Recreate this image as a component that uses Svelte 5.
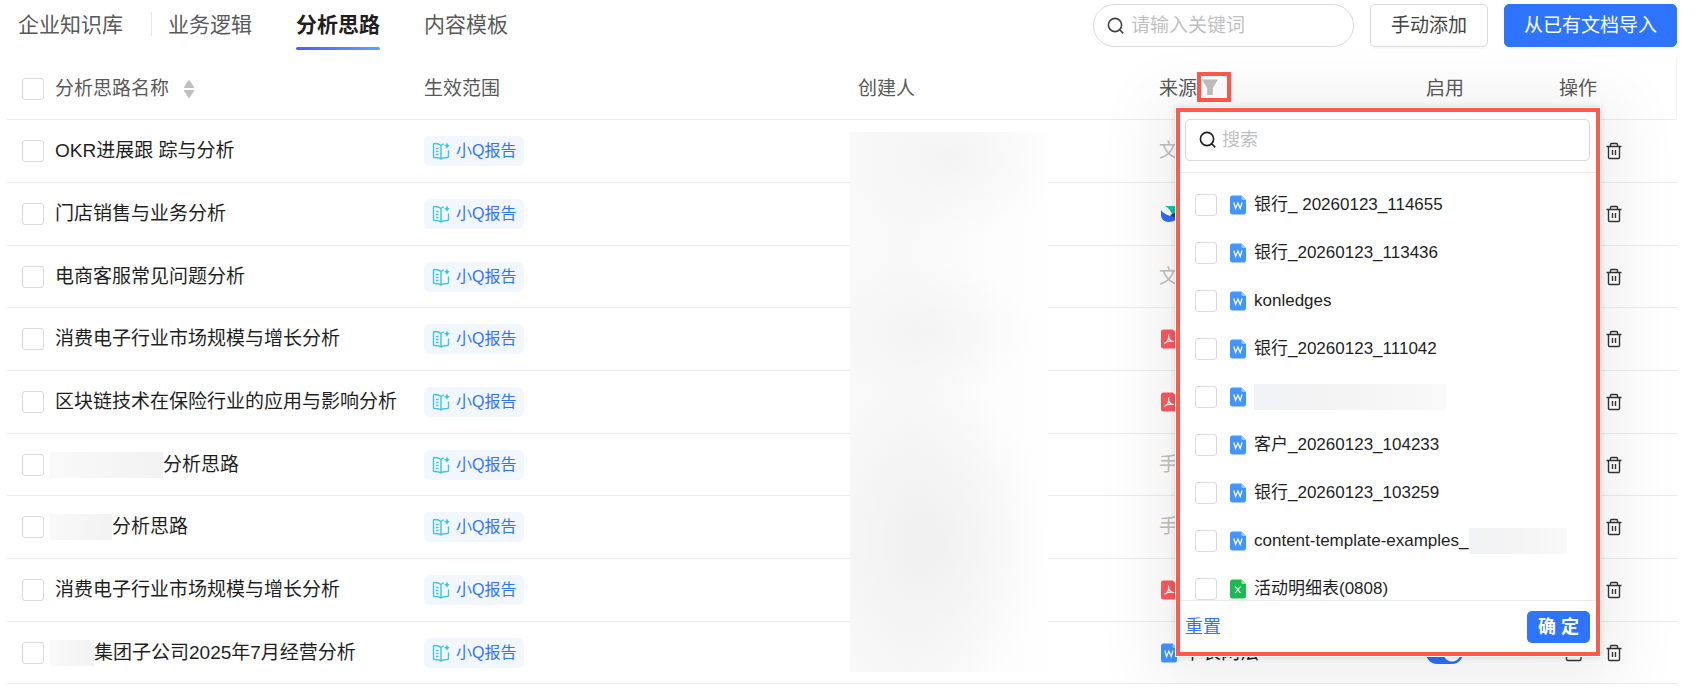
<script lang="ts">
	type FileKind = 'word' | 'excel' | 'pdf' | 'board';

	interface Row {
		name: string;
		mask?: number;
		kind?: FileKind;
		source?: string;
		enabled?: boolean;
	}

	interface Option {
		label: string;
		kind: FileKind;
		mask?: number;
	}

	const tabs = ['企业知识库', '业务逻辑', '分析思路', '内容模板'];
	let activeTab = $state('分析思路');

	const rows: Row[] = [
		{ name: 'OKR进展跟 踪与分析', source: '文' },
		{ name: '门店销售与业务分析', kind: 'board' },
		{ name: '电商客服常见问题分析', source: '文' },
		{ name: '消费电子行业市场规模与增长分析', kind: 'pdf' },
		{ name: '区块链技术在保险行业的应用与影响分析', kind: 'pdf' },
		{ name: '分析思路', mask: 113, source: '手' },
		{ name: '分析思路', mask: 62, source: '手' },
		{ name: '消费电子行业市场规模与增长分析', kind: 'pdf' },
		{ name: '集团子公司2025年7月经营分析', mask: 44, kind: 'word', source: '单表网法', enabled: true }
	];

	const options: Option[] = [
		{ label: '银行_ 20260123_114655', kind: 'word' },
		{ label: '银行_20260123_113436', kind: 'word' },
		{ label: 'konledges', kind: 'word' },
		{ label: '银行_20260123_111042', kind: 'word' },
		{ label: '', kind: 'word', mask: 192 },
		{ label: '客户_20260123_104233', kind: 'word' },
		{ label: '银行_20260123_103259', kind: 'word' },
		{ label: 'content-template-examples_', kind: 'word', mask: 98 },
		{ label: '活动明细表(0808)', kind: 'excel' }
	];
</script>

{#snippet searchIcon()}
	<svg class="search-icon" viewBox="0 0 18 18" width="18" height="18" aria-hidden="true">
		<circle cx="8" cy="8" r="6.6" />
		<path d="M12.8 12.8 16.2 16.4" />
	</svg>
{/snippet}

{#snippet fileIcon(kind: FileKind)}
	{#if kind === 'board'}
		<svg class="file" viewBox="0 0 18 20" width="18" height="20" aria-hidden="true">
			<path d="M4 2h14v7l-6 3C10 8 8 4 4 2z" fill="#0cc9a8" />
			<path d="M0 6c3 4 7 6 12 6l6-3c-1 6-5 9-10 9-5 0-8-3-8-7z" fill="#2f6bf2" />
			<path d="M9 11l5-2 4 2-4 3z" fill="#173a9a" />
		</svg>
	{:else}
		<svg class="file {kind}" viewBox="0 0 16 20" width="16" height="20" aria-hidden="true">
			<path class="sheet" d="M2.5 .5H11.500L16 5V17a2.500 2.500 0 0 1-2.500 2.500h-11A2.500 2.500 0 0 1 0 17V3A2.500 2.500 0 0 1 2.500 .5z" />
			<path class="fold" d="M11.500 .5 16 5h-3A1.500 1.500 0 0 1 11.500 3.500z" />
			{#if kind === 'word'}
				<path class="mark" d="M3.800 7.500 5.600 13.500 7.900 8 10.200 13.500 12 7.500" />
			{:else if kind === 'excel'}
				<path class="mark" d="M5.300 7.500 10.500 14M10.500 7.500 5.300 14" />
			{:else}
				<path class="mark" d="M7.500 5.500C8.500 9 6.500 12.500 3.500 14.500M7.500 8.500c1 2.500 3 4 5.500 4-3-.8-6-.5-8.500 1" />
			{/if}
		</svg>
	{/if}
{/snippet}

<div class="page">
	<header class="topbar">
		<nav class="tabs">
			{#each tabs as tab}
				<button class="tab" class:active={tab === activeTab} onclick={() => (activeTab = tab)}>
					{tab}
				</button>
			{/each}
		</nav>
		<div class="tools">
			<label class="search">
				{@render searchIcon()}
				<input type="text" placeholder="请输入关键词" aria-label="请输入关键词" />
			</label>
			<button class="btn">手动添加</button>
			<button class="btn primary">从已有文档导入</button>
		</div>
	</header>

	<div class="table-wrap">
		<table>
			<colgroup>
				<col class="c-check" />
				<col class="c-name" />
				<col class="c-scope" />
				<col class="c-creator" />
				<col class="c-source" />
				<col class="c-enable" />
				<col class="c-action" />
			</colgroup>
			<thead>
				<tr>
					<th><input type="checkbox" aria-label="全选" /></th>
					<th>
						<span class="cell">
							分析思路名称
							<svg class="sorter" viewBox="0 0 12 20" width="12" height="20" aria-hidden="true">
								<path d="M6 .5 11 8a.6.6 0 0 1-.5.9h-9A.6.6 0 0 1 1 8zM6 19.500 11 12a.6.6 0 0 0-.5-.9h-9A.6.6 0 0 0 1 12z" />
							</svg>
						</span>
					</th>
					<th>生效范围</th>
					<th>创建人</th>
					<th class="source-head">
						<span class="source-title">
							来源
							<button class="filter" aria-label="筛选来源">
								<svg viewBox="0 0 18 18" width="18" height="18" aria-hidden="true">
									<path d="M1 1.500h16l-5.200 8.500v7h-5.600v-7z" />
								</svg>
							</button>
						</span>
						<div class="popover">
							<label class="search box">
								{@render searchIcon()}
								<input type="text" placeholder="搜索" aria-label="搜索" />
							</label>
							<ul class="options">
								{#each options as option}
									<li>
										<label>
											<input type="checkbox" aria-label={option.label || '文档'} />
											{@render fileIcon(option.kind)}
											<span class="option-text">
												{option.label}{#if option.mask}<i class="mask" style:width="{option.mask}px"></i>{/if}
											</span>
										</label>
									</li>
								{/each}
							</ul>
							<div class="popover-foot">
								<button class="link">重置</button>
								<button class="confirm">确 定</button>
							</div>
						</div>
					</th>
					<th>启用</th>
					<th>操作</th>
				</tr>
			</thead>
			<tbody>
				{#each rows as row}
					<tr>
						<td><input type="checkbox" aria-label={row.name} /></td>
						<td>
							<span class="cell" class:masked={row.mask}>
								{#if row.mask}<i class="mask" style:width="{row.mask}px"></i>{/if}{row.name}
							</span>
						</td>
						<td>
							<span class="badge">
								<svg viewBox="0 0 18 18" width="18" height="18" aria-hidden="true">
									<path d="M9 3.500C7.500 2 5 1.500 2.500 1.500a1 1 0 0 0-1 1v12a1 1 0 0 0 1 1c2.500 0 5 0 6.500 1.500 1.500-1.500 4-1.500 6.500-1.500a1 1 0 0 0 1-1V8.500M9 3.500V17M9 3.500c.8-.8 1.700-1.300 2.800-1.600M4 6.500h2.500M4 9.500h2.500M4 12.500h2.500" />
									<path class="star" d="M15 .5l1 2.300 2 1-2 1-1 2.300-1-2.300-2-1 2-1z" />
								</svg>
								小Q报告
							</span>
						</td>
						<td></td>
						<td>
							<span class="source">
								{#if row.kind}{@render fileIcon(row.kind)}{/if}
								{#if row.source}<span class:muted={!row.kind}>{row.source}</span>{/if}
							</span>
						</td>
						<td>
							{#if row.enabled}
								<input class="switch" type="checkbox" role="switch" checked aria-label="启用" />
							{/if}
						</td>
						<td>
							<span class="actions">
								<button class="icon-btn" aria-label="编辑">
									<svg viewBox="0 0 18 18" width="18" height="18" aria-hidden="true">
										<path d="M10 2H3a1.500 1.500 0 0 0-1.500 1.500V15A1.500 1.500 0 0 0 3 16.500h11.500A1.500 1.500 0 0 0 16 15V8M7 11l8-8" />
									</svg>
								</button>
								<button class="icon-btn" aria-label="删除">
									<svg viewBox="0 0 18 18" width="18" height="18" aria-hidden="true">
										<path d="M1.500 4.500h15M5.500 4.500V2.500a1 1 0 0 1 1-1h5a1 1 0 0 1 1 1v2M3.500 4.500V15.500a1 1 0 0 0 1 1h9a1 1 0 0 0 1-1V4.500M7.500 8v5M10.500 8v5" />
									</svg>
								</button>
							</span>
						</td>
					</tr>
				{/each}
			</tbody>
		</table>
		<div class="creator-mask"></div>
	</div>
</div>

<style>
	:global(body) {
		background: #fff;
	}

	.page {
		padding: 4px 21px 0 7px;
		color: #1f1f1f;
		font-family: 'Liberation Sans', 'Noto Sans CJK SC', sans-serif;
		font-size: 19px;
		line-height: 24px;
	}

	button,
	input {
		margin: 0;
		font: inherit;
	}

	button {
		padding: 0;
		border: 0;
		background: none;
		color: inherit;
		cursor: pointer;
	}

	svg {
		flex: none;
		display: block;
	}

	.topbar {
		display: flex;
		justify-content: space-between;
		align-items: flex-start;
	}

	.tabs {
		display: flex;
		padding-left: 11px;

		.tab {
			position: relative;
			height: 46px;
			margin-right: 44px;
			padding-bottom: 5px;
			color: #595959;
			font-size: 21px;
		}

		.tab:first-child {
			margin-right: 16px;
			padding-right: 29px;
		}

		.tab:first-child::after {
			content: '';
			position: absolute;
			top: 8px;
			right: 0;
			width: 1px;
			height: 24px;
			background: #e6e6e6;
		}

		.active {
			color: #1f1f1f;
			font-weight: bold;
		}

		.active::after {
			content: '';
			position: absolute;
			left: 0;
			right: 0;
			bottom: 0;
			height: 3px;
			border-radius: 2px;
			background: linear-gradient(90deg, #5457ff, #55a6ff);
		}
	}

	.tools {
		display: flex;
		gap: 16px;
	}

	.search {
		display: flex;
		align-items: center;
		gap: 6px;
		box-sizing: border-box;
		width: 261px;
		height: 43px;
		padding: 0 13px;
		border: 1px solid #d9d9d9;
		border-radius: 22px;
		background: #fff;

		input {
			flex: 1;
			min-width: 0;
			padding: 0;
			border: 0;
			outline: 0;
			background: none;
		}

		input::placeholder {
			color: #bfbfbf;
		}
	}

	.search-icon {
		fill: none;
		stroke: #434343;
		stroke-width: 1.6;
	}

	.btn {
		box-sizing: border-box;
		height: 43px;
		padding: 0 20px;
		border: 1px solid #d9d9d9;
		border-radius: 5px;
		background: #fff;
		box-shadow: 0 2px 0 #fafafa;
		color: #434343;
	}

	.btn.primary {
		padding: 0 19px;
		border-color: #2f74ff;
		background: #2f74ff;
		color: #fff;
	}

	.table-wrap {
		position: relative;
		margin-top: 8px;
	}

	table {
		width: 100%;
		border-collapse: separate;
		border-spacing: 0;
		table-layout: fixed;
	}

	.c-check {
		width: 48px;
	}
	.c-name {
		width: 369px;
	}
	.c-scope {
		width: 434px;
	}
	.c-creator {
		width: 301px;
	}
	.c-source {
		width: 267px;
	}
	.c-enable {
		width: 133px;
	}

	th,
	td {
		box-sizing: border-box;
		height: 63px;
		padding: 0;
		border-bottom: 1px solid #ececec;
		text-align: left;
		vertical-align: middle;
	}

	th {
		height: 62px;
		color: #595959;
		font-weight: normal;
	}

	th:last-child {
		border-right: 1px solid #f5f5f5;
	}

	tbody tr:nth-child(3n) td {
		height: 62px;
	}

	th:first-child,
	td:first-child {
		padding-left: 15px;
	}

	input[type='checkbox'] {
		appearance: none;
		flex: none;
		display: block;
		box-sizing: border-box;
		width: 22px;
		height: 22px;
		border: 1px solid #d9d9d9;
		border-radius: 3px;
		background: #fff;
	}

	.cell {
		display: flex;
		align-items: center;
		white-space: nowrap;
	}

	.masked {
		margin-left: -5px;
	}

	.mask {
		display: inline-block;
		height: 26px;
		background: linear-gradient(90deg, #f9f9f9, #f2f2f2);
	}

	.option-text .mask {
		background: linear-gradient(90deg, #f2f3f7, #f3f3f3 40%, #f9f9f9);
	}

	.sorter {
		margin-left: 14px;
		fill: #bfbfbf;
	}

	.badge {
		display: inline-flex;
		align-items: center;
		gap: 6px;
		height: 30px;
		padding: 0 8px;
		border-radius: 6px;
		background: #f2f7ff;
		color: #2f74ff;
		font-size: 16px;
		vertical-align: middle;

		svg {
			fill: none;
			stroke: #3cc5dc;
			stroke-width: 1.4;
		}

		.star {
			fill: #3cc5dc;
			stroke: none;
		}
	}

	.creator-mask {
		position: absolute;
		top: 74px;
		bottom: 12px;
		left: 843px;
		width: 198px;
		background:
			radial-gradient(ellipse 110px 80px at 50% 5%, #f4f4f4, transparent),
			radial-gradient(ellipse 110px 70px at 36% 37%, #f4f4f4, transparent),
			radial-gradient(ellipse 120px 170px at 38% 76%, #f0f0f0, transparent),
			linear-gradient(90deg, #f9f9f9, #f8f8f8 30%, #fdfdfd 75%, #fefefe);
	}

	.source-head {
		position: relative;
	}

	.source-title {
		display: flex;
		align-items: center;
	}

	.filter {
		box-sizing: border-box;
		width: 34px;
		height: 30px;
		margin-bottom: 4px;
		border: 4px solid #ff5a4d;

		svg {
			fill: #bfbfbf;
		}
	}

	.source {
		display: flex;
		align-items: center;
		gap: 6px;
		white-space: nowrap;
	}

	.source .file {
		margin-left: 2px;
	}

	.muted {
		color: #bfbfbf;
	}

	.sheet {
		fill: #4294ff;
	}
	.fold {
		fill: #a6cdff;
	}
	.mark {
		fill: none;
		stroke: #fff;
		stroke-width: 1.2;
	}
	.excel .sheet {
		fill: #1db954;
	}
	.excel .fold {
		fill: #a5e887;
	}
	.pdf .sheet,
	.pdf .fold {
		fill: #f95a5f;
	}

	input.switch {
		width: 37px;
		height: 22px;
		border: 0;
		border-radius: 11px;
		background: radial-gradient(circle at 26px 11px, #fff 8px, #2f6ff0 9px);
	}

	.actions {
		display: flex;
		gap: 22px;
		padding-left: 6px;
	}

	.icon-btn svg {
		fill: none;
		stroke: #333;
		stroke-width: 1.4;
	}

	.popover {
		position: absolute;
		z-index: 2;
		top: 50px;
		left: 17px;
		box-sizing: border-box;
		width: 424px;
		border: 4px solid #ff5a4d;
		background: #fff;
		box-shadow:
			0 0 0 1px #fff,
			0 0 6px 1px rgba(0, 0, 0, 0.12),
			0 10px 60px 24px rgba(0, 0, 0, 0.06);
		color: #1f1f1f;
		font-size: 17px;
	}

	.search.box {
		gap: 5px;
		width: auto;
		height: 42px;
		margin: 7px 6px 11px 5px;
		border-radius: 5px;
		font-size: 18px;

		.search-icon {
			stroke: #1f1f1f;
		}
	}

	.options {
		height: 429px;
		box-sizing: border-box;
		margin: 0;
		padding: 8px 15px 0;
		overflow: hidden;
		border: solid #ececec;
		border-width: 1px 0;
		list-style: none;

		label {
			display: flex;
			align-items: center;
			height: 48px;
		}

		.file {
			margin: 0 8px 0 13px;
		}
	}

	.option-text {
		display: flex;
		align-items: center;
		white-space: nowrap;
	}

	.popover-foot {
		display: flex;
		justify-content: space-between;
		align-items: center;
		height: 51px;
		padding: 0 6px 0 5px;
		font-size: 18px;
	}

	.link {
		color: #2f74ff;
	}

	.confirm {
		height: 32px;
		padding: 0 11px;
		border-radius: 5px;
		background: #2f74ff;
		color: #fff;
		font-weight: bold;
	}
</style>
